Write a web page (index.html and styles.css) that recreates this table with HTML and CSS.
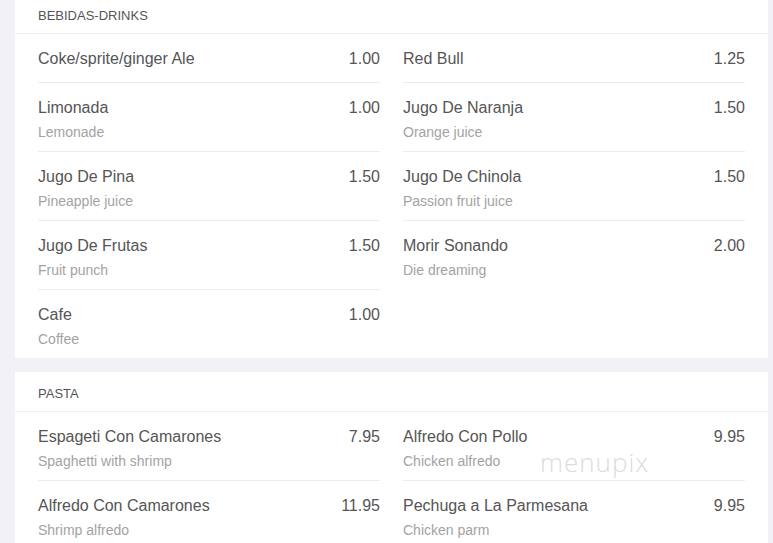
FILE: index.html
```html
<!DOCTYPE html>
<html lang="es">
<head>
<meta charset="utf-8">
<title>Menu</title>
<link rel="stylesheet" href="styles.css">
</head>
<body>
<main class="menu">
  <section class="card card-first">
    <h2 class="card-head">BEBIDAS-DRINKS</h2>
    <div class="items">
      <div class="item"><div class="line"><span class="name">Coke/sprite/ginger Ale</span><span class="price">1.00</span></div></div>
      <div class="item"><div class="line"><span class="name">Red Bull</span><span class="price">1.25</span></div></div>
      <div class="item"><div class="line"><span class="name">Limonada</span><span class="price">1.00</span></div><div class="desc">Lemonade</div></div>
      <div class="item"><div class="line"><span class="name">Jugo De Naranja</span><span class="price">1.50</span></div><div class="desc">Orange juice</div></div>
      <div class="item"><div class="line"><span class="name">Jugo De Pina</span><span class="price">1.50</span></div><div class="desc">Pineapple juice</div></div>
      <div class="item"><div class="line"><span class="name">Jugo De Chinola</span><span class="price">1.50</span></div><div class="desc">Passion fruit juice</div></div>
      <div class="item"><div class="line"><span class="name">Jugo De Frutas</span><span class="price">1.50</span></div><div class="desc">Fruit punch</div></div>
      <div class="item"><div class="line"><span class="name">Morir Sonando</span><span class="price">2.00</span></div><div class="desc">Die dreaming</div></div>
      <div class="item"><div class="line"><span class="name">Cafe</span><span class="price">1.00</span></div><div class="desc">Coffee</div></div>
    </div>
  </section>
  <section class="card card-pasta">
    <h2 class="card-head">PASTA</h2>
    <div class="items">
      <div class="item item-desc-first"><div class="line"><span class="name">Espageti Con Camarones</span><span class="price">7.95</span></div><div class="desc">Spaghetti with shrimp</div></div>
      <div class="item item-desc-first"><div class="line"><span class="name">Alfredo Con Pollo</span><span class="price">9.95</span></div><div class="desc">Chicken alfredo</div></div>
      <div class="item"><div class="line"><span class="name">Alfredo Con Camarones</span><span class="price">11.95</span></div><div class="desc">Shrimp alfredo</div></div>
      <div class="item"><div class="line"><span class="name">Pechuga a La Parmesana</span><span class="price">9.95</span></div><div class="desc">Chicken parm</div></div>
    </div>
    <div class="watermark">menupix</div>
  </section>
</main>
</body>
</html>
```
FILE: styles.css
```css
html, body {
  margin: 0;
  padding: 0;
  background: #f1f1f6;
  font-family: "Liberation Sans", Arial, sans-serif;
  overflow: hidden;
}
.menu {
  display: flex;
  flex-direction: column;
  gap: 14px;
  margin: -6px 5px 0 15px;
}
.card {
  background: #fff;
  position: relative;
}
.card-head {
  margin: 0;
  padding: 14px 23px 9px;
  font-size: 13px;
  line-height: 16px;
  font-weight: normal;
  color: #555;
  border-bottom: 1px solid #f0f0f2;
}
.items {
  display: grid;
  grid-template-columns: 1fr 1fr;
  column-gap: 23px;
  padding: 0 23px;
}
.item {
  padding: 15px 0 10px;
  border-top: 1px solid #ededf0;
}
.item:nth-child(-n+2) {
  border-top: none;
  padding-bottom: 13px;
}
.item.item-desc-first {
  padding-bottom: 10px;
}
.line {
  display: flex;
  justify-content: space-between;
  font-size: 16px;
  line-height: 20px;
  color: #555;
}
.desc {
  margin-top: 5px;
  font-size: 14px;
  line-height: 18px;
  color: #a3a3a3;
}
.watermark {
  position: absolute;
  left: 525px;
  top: 72px;
  font-family: "Open Sans", "Lato", sans-serif;
  font-weight: 300;
  font-size: 26px;
  letter-spacing: 1px;
  color: #dcdcdc;
}
```
